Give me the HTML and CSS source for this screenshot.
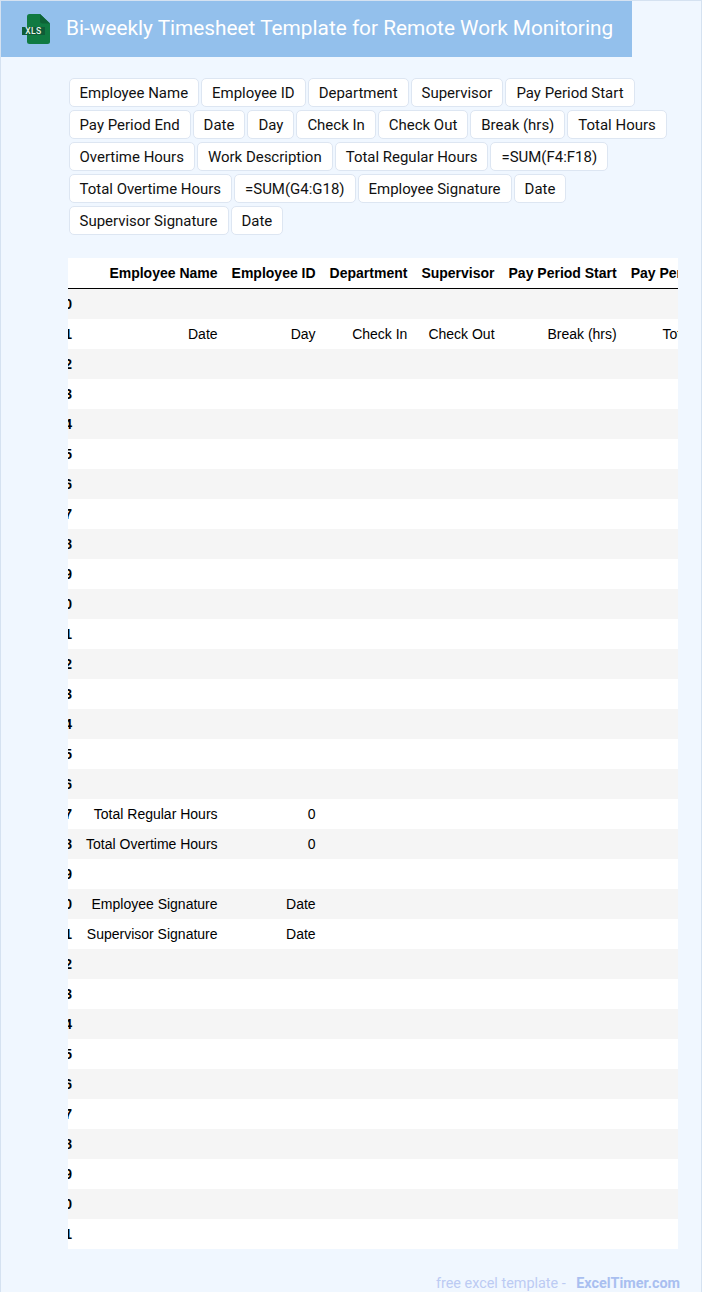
FILE: index.html
```html
<!DOCTYPE html>
<html lang="en">
<head>
<meta charset="utf-8">
<title>Bi-weekly Timesheet Template for Remote Work Monitoring</title>
<link rel="stylesheet" href="styles.css">
</head>
<body>
<div class="page">
  <header class="banner">
    <svg class="logo" width="30" height="32" viewBox="0 0 30 32" aria-hidden="true">
      <path d="M7 3.5 Q7 1 9.5 1 H20 L30 10.5 V28.5 Q30 31 27.500 31 H9.500 Q7 31 7 28.500 Z" fill="#107a42"/>
      <path d="M20 1 L30 10.500 H22.500 Q20 10.500 20 8 Z" fill="#0d6236"/>
      <rect x="2" y="14" width="23" height="8" fill="#0f5c38"/>
      <text x="13.500" y="21" class="logo-text" text-anchor="middle">XLS</text>
    </svg>
    <h1 class="title">Bi-weekly Timesheet Template for Remote Work Monitoring</h1>
  </header>
  <main class="content">
    <ul class="tags">
      <li class="tag">Employee Name</li><li class="tag">Employee ID</li><li class="tag">Department</li><li class="tag">Supervisor</li><li class="tag">Pay Period Start</li><li class="tag">Pay Period End</li><li class="tag">Date</li><li class="tag">Day</li><li class="tag">Check In</li><li class="tag">Check Out</li><li class="tag">Break (hrs)</li><li class="tag">Total Hours</li><li class="tag">Overtime Hours</li><li class="tag">Work Description</li><li class="tag">Total Regular Hours</li><li class="tag">=SUM(F4:F18)</li><li class="tag">Total Overtime Hours</li><li class="tag">=SUM(G4:G18)</li><li class="tag">Employee Signature</li><li class="tag">Date</li><li class="tag">Supervisor Signature</li><li class="tag">Date</li>
    </ul>
    <div class="table-clip">
      <table class="sheet">
        <thead>
          <tr><th></th><th>Employee Name</th><th>Employee ID</th><th>Department</th><th>Supervisor</th><th>Pay Period Start</th><th>Pay Period End</th></tr>
        </thead>
        <tbody id="rows">
          <tr><th>10</th><td></td><td></td><td></td><td></td><td></td><td></td></tr>
          <tr><th>11</th><td>Date</td><td>Day</td><td>Check In</td><td>Check Out</td><td>Break (hrs)</td><td>Total Hours</td></tr>
          <tr><th>12</th><td></td><td></td><td></td><td></td><td></td><td></td></tr>
          <tr><th>13</th><td></td><td></td><td></td><td></td><td></td><td></td></tr>
          <tr><th>14</th><td></td><td></td><td></td><td></td><td></td><td></td></tr>
          <tr><th>15</th><td></td><td></td><td></td><td></td><td></td><td></td></tr>
          <tr><th>16</th><td></td><td></td><td></td><td></td><td></td><td></td></tr>
          <tr><th>17</th><td></td><td></td><td></td><td></td><td></td><td></td></tr>
          <tr><th>18</th><td></td><td></td><td></td><td></td><td></td><td></td></tr>
          <tr><th>19</th><td></td><td></td><td></td><td></td><td></td><td></td></tr>
          <tr><th>20</th><td></td><td></td><td></td><td></td><td></td><td></td></tr>
          <tr><th>21</th><td></td><td></td><td></td><td></td><td></td><td></td></tr>
          <tr><th>22</th><td></td><td></td><td></td><td></td><td></td><td></td></tr>
          <tr><th>23</th><td></td><td></td><td></td><td></td><td></td><td></td></tr>
          <tr><th>24</th><td></td><td></td><td></td><td></td><td></td><td></td></tr>
          <tr><th>25</th><td></td><td></td><td></td><td></td><td></td><td></td></tr>
          <tr><th>26</th><td></td><td></td><td></td><td></td><td></td><td></td></tr>
          <tr><th>27</th><td>Total Regular Hours</td><td>0</td><td></td><td></td><td></td><td></td></tr>
          <tr><th>28</th><td>Total Overtime Hours</td><td>0</td><td></td><td></td><td></td><td></td></tr>
          <tr><th>29</th><td></td><td></td><td></td><td></td><td></td><td></td></tr>
          <tr><th>30</th><td>Employee Signature</td><td>Date</td><td></td><td></td><td></td><td></td></tr>
          <tr><th>31</th><td>Supervisor Signature</td><td>Date</td><td></td><td></td><td></td><td></td></tr>
          <tr><th>32</th><td></td><td></td><td></td><td></td><td></td><td></td></tr>
          <tr><th>33</th><td></td><td></td><td></td><td></td><td></td><td></td></tr>
          <tr><th>34</th><td></td><td></td><td></td><td></td><td></td><td></td></tr>
          <tr><th>35</th><td></td><td></td><td></td><td></td><td></td><td></td></tr>
          <tr><th>36</th><td></td><td></td><td></td><td></td><td></td><td></td></tr>
          <tr><th>37</th><td></td><td></td><td></td><td></td><td></td><td></td></tr>
          <tr><th>38</th><td></td><td></td><td></td><td></td><td></td><td></td></tr>
          <tr><th>39</th><td></td><td></td><td></td><td></td><td></td><td></td></tr>
          <tr><th>40</th><td></td><td></td><td></td><td></td><td></td><td></td></tr>
          <tr><th>41</th><td></td><td></td><td></td><td></td><td></td><td></td></tr>
        </tbody>
      </table>
    </div>
  </main>
  <footer class="credit">free excel template - <a class="credit-link">ExcelTimer.com</a></footer>
</div>
</body>
</html>
```
FILE: styles.css
```css
* { box-sizing: border-box; }
html, body { margin: 0; padding: 0; }
body { background: #f0f7ff; font-family: Roboto, "Liberation Sans", sans-serif; overflow: hidden; }
.page { height: 1292px; border-top: 1px solid #d5e2f1; border-right: 1px solid #d5e2f1; border-left: 1px solid #d5e2f1; display: flex; flex-direction: column; }
.banner { width: 631px; height: 56px; background: #93c0ec; display: flex; align-items: center; padding-left: 19px; gap: 16px; flex: none; }
.logo { flex: none; }
.logo-text { font: 500 8.5px Roboto, sans-serif; fill: #e8f5ee; letter-spacing: .4px; }
.title { margin: 0 0 2px; font-weight: 400; font-size: 20.8px; color: #fff; white-space: nowrap; }
.content { padding: 21px 24px 0 67px; flex: none; }
.tags { list-style: none; margin: 0; padding: 0 0 0 .5px; display: flex; flex-wrap: wrap; gap: 3px 2px; }
.tag { background: #fff; border: 1px solid #dde6f2; border-radius: 5px; height: 29px; line-height: 29px; padding: 0 10px; font-size: 14.98px; color: #111; white-space: nowrap; }
.table-clip { margin-top: 23px; width: 610px; overflow: hidden; }
.sheet { border-collapse: separate; border-spacing: 0; font-family: "Liberation Sans", Arial, sans-serif; font-size: 14px; color: #000; margin-left: -18.5px; }
.sheet th, .sheet td { height: 30px; padding: 0 7px; text-align: right; white-space: nowrap; }
.sheet thead tr { background: #fff; }
.sheet thead th { height: 31px; border-bottom: 1px solid #000; }
.sheet tbody tr { background: #fff; }
.sheet tbody tr:nth-child(odd) { background: #f5f5f5; }
.credit { margin-top: auto; padding: 0 21px 0 0; text-align: right; font-size: 14.4px; line-height: 18px; height: 17px; color: #bccbf3; }
.credit-link { font-weight: 700; color: #a9bff0; margin-left: 7px; }
```
